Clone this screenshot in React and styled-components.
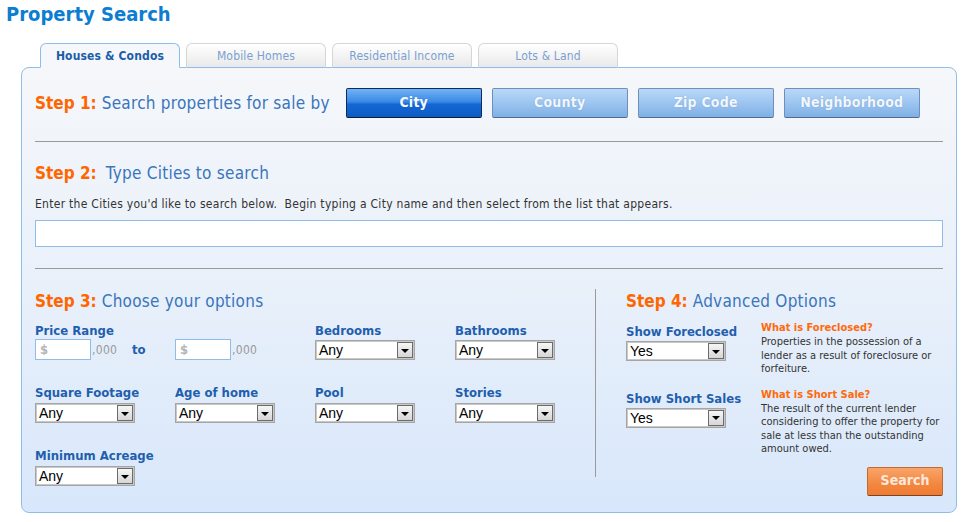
import React from 'react';
import styled, { createGlobalStyle } from 'styled-components';

const GlobalStyle = createGlobalStyle`
  html, body {
    margin: 0;
    padding: 0;
    background: #ffffff;
  }
  body {
    font-family: "DejaVu Sans Condensed", "DejaVu Sans", Verdana, sans-serif;
    color: #333333;
  }
`;

const Page = styled.div`
  width: 962px;
  padding: 0 0 0 6px;
  box-sizing: border-box;
`;

const Title = styled.h1`
  margin: 0;
  padding-top: 2px;
  font-size: 20px;
  line-height: 24px;
  font-weight: bold;
  color: #0b7dd2;
`;

const TabBar = styled.div`
  display: flex;
  gap: 6px;
  margin-top: 17px;
  padding-left: 34px;
  position: relative;
  z-index: 2;
`;

const Tab = styled.div`
  width: 140px;
  height: 25px;
  box-sizing: border-box;
  border: 1px solid ${({ $active }) => ($active ? '#8fbde9' : '#d6d6d6')};
  border-bottom: ${({ $active }) => ($active ? '1px solid #f5f7fa' : '1px solid #8fbde9')};
  border-radius: 6px 6px 0 0;
  background: ${({ $active }) =>
    $active ? '#f5f7fa' : 'linear-gradient(#ffffff, #e9e9e9)'};
  color: ${({ $active }) => ($active ? '#1c5ea8' : '#7aa0d2')};
  font-size: 12px;
  letter-spacing: 0.15px;
  font-weight: ${({ $active }) => ($active ? 'bold' : 'normal')};
  display: flex;
  align-items: center;
  justify-content: center;
  margin-bottom: -1px;
`;

const Panel = styled.div`
  margin-left: 15px;
  width: 936px;
  height: 446px;
  box-sizing: border-box;
  border: 1px solid #8fbde9;
  border-radius: 8px;
  background: linear-gradient(#f5f7fa 0%, #eaf1fa 45%, #d8e7fb 100%);
  padding: 20px 13px 0 13px;
  position: relative;
  z-index: 1;
`;

const StepRow = styled.div`
  display: flex;
  align-items: center;
  height: 30px;
`;

const Heading = styled.div`
  font-size: 17px;
  line-height: 20px;
  letter-spacing: 0.25px;
  color: #3a75bd;
  white-space: nowrap;
`;

const StepNo = styled.span`
  color: #ff6600;
  font-weight: bold;
  letter-spacing: 0;
  margin-right: ${({ $gap }) => $gap || 5}px;
`;

const ModeButtons = styled.div`
  display: flex;
  gap: 10px;
  margin-left: 16px;
`;

const ModeButton = styled.div`
  width: 136px;
  height: 30px;
  box-sizing: border-box;
  border: 1px solid ${({ $active }) => ($active ? '#0c2c5e' : '#6f8fb6')};
  border-bottom-color: ${({ $active }) => ($active ? '#061b3d' : '#4f6a8c')};
  border-radius: 2px;
  background: ${({ $active }) =>
    $active
      ? 'linear-gradient(#74b2f5 0%, #3a8ae6 45%, #1466d4 55%, #0c5cc4 100%)'
      : 'linear-gradient(#b9d8f8 0%, #9cc5f0 50%, #7fb0e6 100%)'};
  color: ${({ $active }) => ($active ? '#f4f8ff' : '#f2f7fd')};
  font-size: 14px;
  letter-spacing: 0.2px;
  font-weight: bold;
  display: flex;
  align-items: center;
  justify-content: center;
  padding-bottom: 3px;
  text-shadow: 0 0 1px rgba(40, 80, 140, 0.4);
`;

const Divider = styled.div`
  height: 1px;
  background: #9a9a9a;
  margin-top: ${({ $top }) => $top}px;
`;

const Section = styled.div`
  padding-top: ${({ $top }) => $top}px;
`;

const Help = styled.div`
  font-size: 12px;
  line-height: 14px;
  letter-spacing: 0.28px;
  color: #333333;
  margin-top: 14px;
  white-space: pre;
`;

const CityInput = styled.div`
  margin-top: 9px;
  height: 27px;
  box-sizing: border-box;
  border: 1px solid #8fbde9;
  background: #ffffff;
`;

const Lower = styled.div`
  display: flex;
  margin-top: 20px;
`;

const Options = styled.div`
  width: 560px;
  padding-top: 2px;
`;

const VRule = styled.div`
  width: 1px;
  height: 188px;
  background: #9a9a9a;
`;

const Advanced = styled.div`
  flex: 1;
  padding-left: 30px;
  padding-top: 2px;
  display: flex;
  flex-direction: column;
`;

const OptionGrid = styled.div`
  display: grid;
  grid-template-columns: repeat(4, 140px);
  row-gap: 25px;
  margin-top: 12px;
`;

const Field = styled.div`
  grid-column: span ${({ $span }) => $span || 1};
  display: flex;
  flex-direction: column;
`;

const Label = styled.div`
  font-size: 13px;
  line-height: 15px;
  font-weight: bold;
  color: #1f5fae;
  white-space: nowrap;
  margin-bottom: ${({ $gap }) => $gap ?? 3}px;
`;

const PriceRow = styled.div`
  display: flex;
  align-items: center;
  height: 21px;
`;

const PriceBox = styled.div`
  width: 56px;
  height: 21px;
  box-sizing: border-box;
  border: 1px solid #8fbde9;
  background: #ffffff;
  color: #b5b5b5;
  font-size: 13px;
  font-weight: bold;
  line-height: 19px;
  padding-left: 4px;
`;

const Thousands = styled.span`
  color: #9a9a9a;
  font-size: 12px;
  letter-spacing: 0.3px;
  width: ${({ $w }) => $w}px;
  padding-left: 1px;
`;

const To = styled.span`
  color: #1f5fae;
  font-size: 13px;
  font-weight: bold;
  width: 43px;
`;

const Select = styled.div`
  width: 100px;
  height: 20px;
  box-sizing: border-box;
  border: 1px solid #a5a5a5;
  outline: 1px solid #c8c8c8;
  outline-offset: -2px;
  background: #ffffff;
  display: flex;
  align-items: center;
  justify-content: space-between;
  font-family: "Liberation Sans", Arial, sans-serif;
  font-size: 14px;
  color: #000000;
  padding-left: 3px;
`;

const Arrow = styled.span`
  width: 16px;
  height: 16px;
  margin-right: 1px;
  box-sizing: border-box;
  border: 1px solid #6b6b6b;
  background: linear-gradient(#f6f6f6, #d6d6d6);
  display: flex;
  align-items: center;
  justify-content: center;
  &::after {
    content: '';
    border-left: 4px solid transparent;
    border-right: 4px solid transparent;
    border-top: 4px solid #000000;
    margin-top: 1px;
  }
`;

const AdvRow = styled.div`
  display: flex;
  margin-top: ${({ $top }) => $top}px;
`;

const AdvField = styled.div`
  width: 135px;
  flex-shrink: 0;
  padding-top: ${({ $top }) => $top || 0}px;
`;

const Explain = styled.div`
  font-size: 11px;
  line-height: 13.5px;
  color: #333333;
`;

const ExplainTitle = styled.div`
  color: #ff6a0a;
  font-weight: bold;
  font-size: 11px;
  line-height: 13px;
  margin-bottom: 1px;
`;

const SearchButton = styled.div`
  align-self: flex-end;
  margin-top: 11px;
  width: 76px;
  height: 29px;
  box-sizing: border-box;
  border: 1px solid #c06a30;
  border-bottom-color: #7a4420;
  border-radius: 2px;
  background: linear-gradient(#f9a46a, #f3873f 60%, #ef7b33);
  color: #fbe8dc;
  font-size: 14px;
  font-weight: bold;
  display: flex;
  align-items: center;
  justify-content: center;
  padding-bottom: 2px;
`;

const tabs = ['Houses & Condos', 'Mobile Homes', 'Residential Income', 'Lots & Land'];
const modes = ['City', 'County', 'Zip Code', 'Neighborhood'];

const Dropdown = ({ value = 'Any' }) => (
  <Select>
    <span>{value}</span>
    <Arrow />
  </Select>
);

export default function App() {
  return (
    <Page>
      <GlobalStyle />
      <Title>Property Search</Title>
      <TabBar>
        {tabs.map((t, i) => (
          <Tab key={t} $active={i === 0}>{t}</Tab>
        ))}
      </TabBar>
      <Panel>
        <StepRow>
          <Heading><StepNo $gap={5}>Step 1:</StepNo>Search properties for sale by</Heading>
          <ModeButtons>
            {modes.map((m, i) => (
              <ModeButton key={m} $active={i === 0}>{m}</ModeButton>
            ))}
          </ModeButtons>
        </StepRow>
        <Divider $top={23} />
        <Section $top={21}>
          <Heading><StepNo $gap={9}>Step 2:</StepNo>Type Cities to search</Heading>
          <Help>{"Enter the Cities you'd like to search below.  Begin typing a City name and then select from the list that appears."}</Help>
          <CityInput />
        </Section>
        <Divider $top={21} />
        <Lower>
          <Options>
            <Heading><StepNo $gap={5}>Step 3:</StepNo>Choose your options</Heading>
            <OptionGrid>
              <Field $span={2}>
                <Label $gap={1}>Price Range</Label>
                <PriceRow>
                  <PriceBox>$</PriceBox>
                  <Thousands $w={40}>,000</Thousands>
                  <To>to</To>
                  <PriceBox>$</PriceBox>
                  <Thousands $w={40}>,000</Thousands>
                </PriceRow>
              </Field>
              <Field><Label $gap={2}>Bedrooms</Label><Dropdown /></Field>
              <Field><Label $gap={2}>Bathrooms</Label><Dropdown /></Field>
              <Field><Label>Square Footage</Label><Dropdown /></Field>
              <Field><Label>Age of home</Label><Dropdown /></Field>
              <Field><Label>Pool</Label><Dropdown /></Field>
              <Field><Label>Stories</Label><Dropdown /></Field>
              <Field><Label>Minimum Acreage</Label><Dropdown /></Field>
            </OptionGrid>
          </Options>
          <VRule />
          <Advanced>
            <Heading><StepNo $gap={5}>Step 4:</StepNo>Advanced Options</Heading>
            <AdvRow $top={10}>
              <AdvField $top={3}>
                <Label $gap={2}>Show Foreclosed</Label>
                <Dropdown value="Yes" />
              </AdvField>
              <Explain>
                <ExplainTitle>What is Foreclosed?</ExplainTitle>
                Properties in the possession of a<br />
                lender as a result of foreclosure or<br />
                forfeiture.
              </Explain>
            </AdvRow>
            <AdvRow $top={12}>
              <AdvField $top={3}>
                <Label $gap={2}>Show Short Sales</Label>
                <Dropdown value="Yes" />
              </AdvField>
              <Explain>
                <ExplainTitle>What is Short Sale?</ExplainTitle>
                The result of the current lender<br />
                considering to offer the property for<br />
                sale at less than the outstanding<br />
                amount owed.
              </Explain>
            </AdvRow>
            <SearchButton>Search</SearchButton>
          </Advanced>
        </Lower>
      </Panel>
    </Page>
  );
}
